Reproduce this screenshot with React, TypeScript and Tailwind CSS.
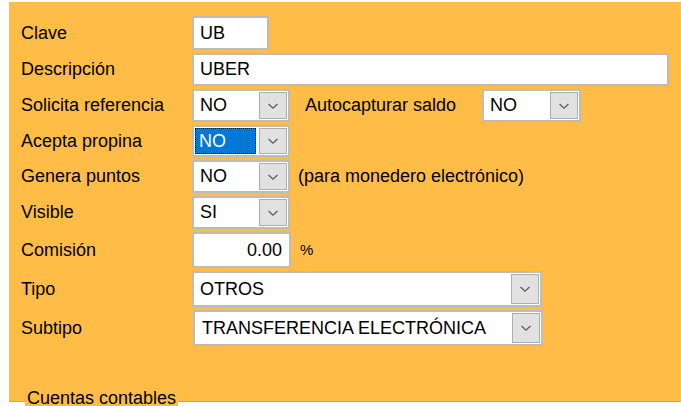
import React from "react";

function Chevron() {
  return (
    <svg width="12" height="8" viewBox="0 0 12 8">
      <polyline points="1.5,2 6,6.2 10.5,2" fill="none" stroke="#5c5c5c" strokeWidth="1.3" />
    </svg>
  );
}

function TextBox({ value, w, right }: { value: string; w: string; right?: boolean }) {
  return (
    <div className={`flex h-full items-center border-2 border-[#bcbcbc] bg-white px-[6px] ${w} ${right ? "justify-end pr-[7px]" : ""}`}>
      {value}
    </div>
  );
}

function Combo({ value, w, focused, pad }: { value: string; w: string; focused?: boolean; pad?: string }) {
  return (
    <div className={`flex h-full items-stretch border-2 border-[#bcbcbc] bg-white ${w}`}>
      {focused ? (
        <div className="my-[1px] ml-[1px] mr-[2px] flex flex-1 items-center border border-dotted border-black bg-[#0078d7] pl-[3px] text-white">
          {value}
        </div>
      ) : (
        <div className={`flex flex-1 items-center ${pad ?? "pl-[6px]"}`}>{value}</div>
      )}
      <div className="m-[1px] flex w-[28px] items-center justify-center border border-[#adadad] bg-[#e1e1e1]">
        <Chevron />
      </div>
    </div>
  );
}

function Row({ label, h, children }: { label: string; h: string; children: React.ReactNode }) {
  return (
    <div className={`flex items-center ${h}`}>
      <div className="w-[183px] pl-[12px]">{label}</div>
      {children}
    </div>
  );
}

export default function App() {
  return (
    <div className="relative h-[406px] w-[681px] overflow-hidden bg-white pl-[9px] pt-[2px] font-['Liberation_Sans',Arial,sans-serif] text-[18px] text-black">
      <div className="flex h-[400px] flex-col gap-[3px] border-b border-[#a8a8a8] bg-[#FFBD47] pt-[14px]">
        <Row label="Clave" h="h-[34px]">
          <TextBox value="UB" w="w-[77px]" />
        </Row>
        <Row label="Descripción" h="h-[33px]">
          <TextBox value="UBER" w="w-[477px]" />
        </Row>
        <Row label="Solicita referencia" h="h-[33px]">
          <Combo value="NO" w="w-[98px]" />
          <div className="ml-[15px] w-[177px]">Autocapturar saldo</div>
          <Combo value="NO" w="w-[99px]" />
        </Row>
        <Row label="Acepta propina" h="h-[32px]">
          <Combo value="NO" w="w-[98px]" focused />
        </Row>
        <Row label="Genera puntos" h="h-[33px]">
          <Combo value="NO" w="w-[98px]" />
          <div className="ml-[8px]">(para monedero electrónico)</div>
        </Row>
        <Row label="Visible" h="h-[33px]">
          <Combo value="SI" w="w-[98px]" />
        </Row>
        <Row label="Comisión" h="h-[36px]">
          <TextBox value="0.00" w="w-[99px]" right />
          <div className="ml-[9px] text-[15px]">%</div>
        </Row>
        <Row label="Tipo" h="h-[36px]">
          <Combo value="OTROS" w="w-[350px]" />
        </Row>
        <Row label="Subtipo" h="h-[36px]">
          <div className="ml-[1px] h-full">
            <Combo value="TRANSFERENCIA ELECTRÓNICA" w="w-[350px]" pad="pl-[7px]" />
          </div>
        </Row>
      </div>
      <span className="absolute left-[25px] top-[385px] bg-[#FFBD47] px-[2px]">Cuentas contables</span>
    </div>
  );
}
